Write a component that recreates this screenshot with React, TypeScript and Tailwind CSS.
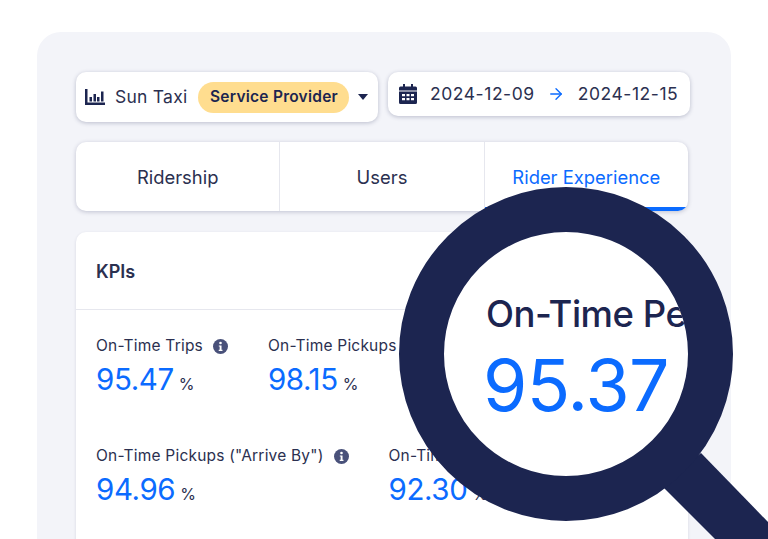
import { ArrowRight } from "lucide-react";

const font = "font-['Inter',sans-serif]";

function InfoDot() {
  return (
    <svg viewBox="0 0 16 16" className="ml-[10px] h-[15px] w-[15px] shrink-0">
      <circle cx="8" cy="8" r="8" fill="#49517a" />
      <circle cx="8" cy="4.3" r="1.4" fill="#fff" />
      <path d="M6.2 6.8h2.9v4.6h1v1.3H6.1v-1.3h1V8.1h-.9z" fill="#fff" />
    </svg>
  );
}

function Kpi({ label, value, info = true }: { label: string; value: string; info?: boolean }) {
  return (
    <div className="shrink-0">
      <div className="flex h-[20px] items-center text-[15.5px] tracking-[0.2px] text-[#2b3050]">
        {label}
        {info && <InfoDot />}
      </div>
      <div className="mt-[4px] flex items-baseline text-[#0b6bff]">
        <span className="text-[29.5px] leading-[38px] tracking-[-0.4px]">{value}</span>
        <span className="ml-[5px] text-[16px] text-[#2b3050]">%</span>
      </div>
    </div>
  );
}

function Tab({ label, active }: { label: string; active?: boolean }) {
  return (
    <div
      className={
        active
          ? "flex flex-1 items-center justify-center border-b-[4px] border-[#0b6bff] pt-[6px] text-[#0b6bff]"
          : "flex flex-1 items-center justify-center border-r border-[#e6e7ee] pt-[2px] text-[#2b3050]"
      }
    >
      {label}
    </div>
  );
}

export default function App() {
  return (
    <div className={`relative h-[539px] w-[768px] overflow-hidden bg-white px-[37px] pt-[32px] ${font}`}>
      <div className="h-[560px] w-[694px] rounded-[24px] bg-[#f3f4f9] px-[39px] pt-[40px]">
        {/* Filters */}
        <div className="flex items-start gap-[10px]">
          <div className="flex h-[50px] w-[302px] shrink-0 items-center rounded-[10px] bg-white pl-[9px] shadow-[0_1px_4px_rgba(40,45,90,0.28)]">
            <svg viewBox="0 0 20 16" className="h-[16px] w-[20px] text-[#1c2550]" fill="currentColor">
              <path d="M0 0h2.5v13.5H20V16H0z" />
              <path d="M4.5 8h2.5v4.5H4.5zM8.5 5H11v7.5H8.5zM12 8h2.5v4.5H12zM16 2.5h2.5v10H16z" />
            </svg>
            <span className="ml-[10px] pt-[1px] text-[17.5px] tracking-[0.25px] text-[#2b3050]">Sun Taxi</span>
            <span className="ml-[11px] flex h-[31px] w-[151px] items-center justify-center rounded-full bg-[#ffdd8f] text-[15.5px] font-semibold tracking-[0.25px] text-[#1c2550]">
              Service Provider
            </span>
            <svg viewBox="0 0 10 6" className="ml-[9px] h-[6px] w-[10px]" fill="#1c2550">
              <path d="M0 0h10L5 6z" />
            </svg>
          </div>
          <div className="flex h-[44px] w-[302px] shrink-0 items-center rounded-[10px] bg-white pl-[11px] shadow-[0_1px_4px_rgba(40,45,90,0.28)]">
            <svg viewBox="0 0 18 20" className="h-[20px] w-[18px]" fill="#1c2550">
              <path d="M4 0h2v2.5h6V0h2v2.5h2.5A1.5 1.5 0 0 1 18 4v2.5H0V4a1.5 1.5 0 0 1 1.5-1.5H4z" />
              <path
                fillRule="evenodd"
                d="M0 7.5h18v11a1.5 1.5 0 0 1-1.5 1.5h-15A1.5 1.5 0 0 1 0 18.5zM3 10v2.2h3V10zm4.5 0v2.2h3V10zm4.5 0v2.2h3V10zM3 14v2.2h3V14zm4.5 0v2.2h3V14zm4.5 0v2.2h3V14z"
              />
            </svg>
            <span className="ml-[13px] pt-[1px] text-[17.5px] tracking-[0.55px] text-[#2b3050]">2024-12-09</span>
            <ArrowRight className="ml-[12px] h-[18px] w-[18px] text-[#0b6bff]" strokeWidth={1.8} />
            <span className="ml-[13px] pt-[1px] text-[17.5px] tracking-[0.55px] text-[#2b3050]">2024-12-15</span>
          </div>
        </div>

        {/* Tabs */}
        <div className="mt-[20px] flex h-[69px] w-[612px] overflow-hidden rounded-[10px] bg-white text-[18.4px] shadow-[0_1px_4px_rgba(40,45,90,0.25)]">
          <Tab label="Ridership" />
          <Tab label="Users" />
          <Tab label="Rider Experience" active />
        </div>

        {/* KPI card */}
        <div className="mt-[21px] h-[400px] w-[612px] rounded-[10px] bg-white shadow-[0_1px_3px_rgba(40,45,90,0.15)]">
          <div className="flex h-[78px] items-center border-b border-[#e6e7ee] px-[20px] pt-[2px] text-[18px] font-semibold text-[#2b3050]">
            KPIs
          </div>
          <div className="px-[20px] pt-[26px]">
            <div className="flex gap-[40px]">
              <Kpi label="On-Time Trips" value="95.47" />
              <Kpi label="On-Time Pickups" value="98.15" />
            </div>
            <div className="mt-[48px] flex gap-[40px]">
              <Kpi label={'On-Time Pickups ("Arrive By")'} value="94.96" />
              <Kpi label="On-Time Drop-offs" value="92.30" info={false} />
            </div>
          </div>
        </div>
      </div>

      {/* Magnifier */}
      <svg viewBox="0 0 108 99" className="absolute left-[660px] top-[440px] h-[99px] w-[108px]" fill="#1c2550">
        <path d="M0 44 L41 13 L108 82 V99 H55z" />
      </svg>
      <div className="absolute left-[399px] top-[187px] h-[334px] w-[334px] overflow-hidden rounded-full border-[45px] border-[#1c2550] bg-white">
        <div className="absolute left-[42px] top-[60px] whitespace-nowrap text-[36.5px] font-medium leading-[44px] tracking-[-0.5px] text-[#1c2550]">
          On-Time Performance
        </div>
        <div className="absolute left-[39px] top-[111px] text-[71.5px] leading-[84px] tracking-[-0.7px] text-[#0b6bff]">
          95.37
        </div>
      </div>
    </div>
  );
}
